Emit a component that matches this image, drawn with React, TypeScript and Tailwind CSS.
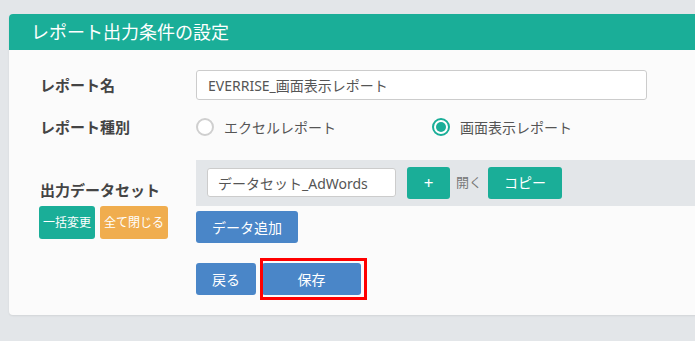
import React, { useState } from 'react';

const font = { fontFamily: '"Noto Sans", "Noto Sans CJK JP", sans-serif' };

export default function App() {
  const [kind, setKind] = useState<'excel' | 'screen'>('screen');
  const [name, setName] = useState('EVERRISE_画面表示レポート');
  const [dataset, setDataset] = useState('データセット_AdWords');

  return (
    <div style={font} className="w-[695px] h-[341px] overflow-hidden bg-[#e3e6e9] pt-[14px] pl-[9px]">
      <div className="w-[720px] h-[301px] bg-[#fbfbfb] rounded-[4px] shadow-[0_1px_2px_rgba(0,0,0,0.08)] overflow-hidden">
        {/* ヘッダー */}
        <div className="h-[36px] bg-[#1aae98] flex items-center pl-[22px]">
          <h1 className="text-[18px] text-white leading-none">レポート出力条件の設定</h1>
        </div>

        <div className="pl-[31px] pt-[20px]">
          {/* レポート名 */}
          <div className="flex items-center h-[30px]">
            <label className="w-[156px] text-[15px] font-bold text-[#444]">レポート名</label>
            <input
              value={name}
              onChange={e => setName(e.target.value)}
              className="w-[451px] h-[30px] bg-white border border-[#ccc] rounded-[3px] px-[11px] text-[14px] text-[#555] outline-none"
            />
          </div>

          {/* レポート種別 */}
          <div className="flex items-center h-[30px] mt-[12px]">
            <label className="w-[156px] text-[15px] font-bold text-[#444]">レポート種別</label>
            <button onClick={() => setKind('excel')} className="w-[236px] flex items-center gap-[10px] text-[14px] text-[#555]">
              <span className={`w-[18px] h-[18px] rounded-full border-2 flex items-center justify-center ${kind === 'excel' ? 'border-[#1aae98]' : 'border-[#cfcfcf] bg-white'}`}>
                {kind === 'excel' && <span className="w-[9px] h-[9px] rounded-full bg-[#1aae98]" />}
              </span>
              エクセルレポート
            </button>
            <button onClick={() => setKind('screen')} className="flex items-center gap-[10px] text-[14px] text-[#555]">
              <span className={`w-[18px] h-[18px] rounded-full border-2 flex items-center justify-center ${kind === 'screen' ? 'border-[#1aae98] bg-white' : 'border-[#cfcfcf] bg-white'}`}>
                {kind === 'screen' && <span className="w-[10px] h-[10px] rounded-full bg-[#1aae98]" />}
              </span>
              画面表示レポート
            </button>
          </div>

          {/* 出力データセット */}
          <div className="flex mt-[18px]">
            <div className="w-[156px] pt-[19px]">
              <div className="text-[15px] font-bold text-[#444] leading-[22px]">出力データセット</div>
              <div className="flex gap-[5px] mt-[5px] -ml-[1px]">
                <button className="h-[33px] px-[4px] bg-[#1aae98] text-white text-[12px] rounded-[3px] w-[56px]">一括変更</button>
                <button className="h-[33px] px-[3px] bg-[#f0ad4e] text-white text-[12px] rounded-[3px] w-[68px]">全て閉じる</button>
              </div>
            </div>
            <div className="flex-1">
              <div className="h-[46px] bg-[#e3e6e9] flex items-center pl-[11px] pb-[1px]">
                <input
                  value={dataset}
                  onChange={e => setDataset(e.target.value)}
                  className="w-[189px] h-[29px] bg-white border border-[#ccc] rounded-[3px] px-[10px] text-[14px] text-[#555] outline-none self-start mt-[8px]"
                />
                <button className="ml-[11px] w-[43px] h-[32px] bg-[#1aae98] text-white text-[17px] rounded-[3px] leading-none">+</button>
                <span className="ml-[6px] text-[13px] text-[#777]">開く</span>
                <button className="ml-[6px] w-[74px] h-[32px] bg-[#1aae98] text-white text-[14px] rounded-[3px]">コピー</button>
              </div>
              <button className="mt-[5px] w-[102px] h-[32px] bg-[#4a86c8] text-white text-[14px] rounded-[3px]">データ追加</button>
            </div>
          </div>

          {/* 戻る / 保存 */}
          <div className="flex gap-[6px] ml-[156px] mt-[20px]">
            <button className="w-[60px] h-[32px] bg-[#4a86c8] text-white text-[14px] rounded-[3px]">戻る</button>
            <button className="relative w-[99px] h-[32px] bg-[#4a86c8] text-white text-[14px] rounded-[3px]">
              保存
              <span className="absolute -left-[2px] -right-[6px] -top-[5px] -bottom-[5px] border-[3px] border-[#f00] pointer-events-none" />
            </button>
          </div>
        </div>
      </div>
    </div>
  );
}
